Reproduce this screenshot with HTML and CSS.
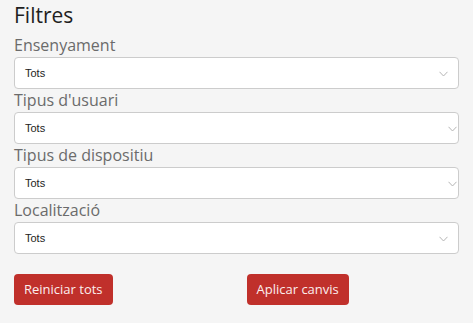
FILE: index.html
```html
<!DOCTYPE html>
<html>
<head>
<meta charset="utf-8">
<link rel="stylesheet" href="styles.css">
</head>
<body>
<div class="panel">
  <h2 class="title">Filtres</h2>
  <div class="group">
    <label class="label">Ensenyament</label>
    <div class="select"><span>Tots</span><svg class="chev" width="9" height="6" viewBox="0 0 9 6"><path d="M0.5 0.8 L4.5 5 L8.5 0.8" fill="none" stroke="#b5b5b5" stroke-width="1"/></svg></div>
  </div>
  <div class="group">
    <label class="label">Tipus d'usuari</label>
    <div class="select edge"><span>Tots</span><svg class="chev" width="9" height="6" viewBox="0 0 9 6"><path d="M0.5 0.8 L4.5 5 L8.5 0.8" fill="none" stroke="#b5b5b5" stroke-width="1"/></svg></div>
  </div>
  <div class="group">
    <label class="label">Tipus de dispositiu</label>
    <div class="select edge"><span>Tots</span><svg class="chev" width="9" height="6" viewBox="0 0 9 6"><path d="M0.5 0.8 L4.5 5 L8.5 0.8" fill="none" stroke="#b5b5b5" stroke-width="1"/></svg></div>
  </div>
  <div class="group">
    <label class="label">Localització</label>
    <div class="select"><span>Tots</span><svg class="chev" width="9" height="6" viewBox="0 0 9 6"><path d="M0.5 0.8 L4.5 5 L8.5 0.8" fill="none" stroke="#b5b5b5" stroke-width="1"/></svg></div>
  </div>
  <div class="actions">
    <div><button class="btn">Reiniciar tots</button></div>
    <div><button class="btn">Aplicar canvis</button></div>
  </div>
</div>
</body>
</html>
```
FILE: styles.css
```css
html, body {
  margin: 0;
  padding: 0;
  background: #ffffff;
}
.panel {
  width: 473px;
  height: 323px;
  box-sizing: border-box;
  background: #f5f5f5;
  padding: 1px 14px 0 14px;
  font-family: "Open Sans", sans-serif;
}
.title {
  margin: 0 0 5px 0;
  font-size: 21px;
  font-weight: 400;
  line-height: 28px;
  color: #1f1f1f;
}
.group {
  display: flex;
  flex-direction: column;
}
.label {
  font-size: 16px;
  line-height: 23px;
  color: #6b6b6b;
  height: 23px;
}
.select {
  height: 32px;
  box-sizing: border-box;
  background: #ffffff;
  border: 1px solid #cccccc;
  border-radius: 4px;
  display: flex;
  align-items: center;
  justify-content: space-between;
  padding: 0 10px 0 10px;
  font-family: "Liberation Sans", Arial, sans-serif;
  font-size: 11px;
  color: #222222;
}
.select.edge {
  padding-right: 1px;
}
.chev {
  display: block;
  margin-top: 2px;
}
.actions {
  display: grid;
  grid-template-columns: 1fr 1fr;
  column-gap: 20px;
  margin-top: 20px;
}
.btn {
  background: #c0302b;
  color: #fbeeee;
  border: none;
  border-radius: 4px;
  height: 31px;
  padding: 0 10px;
  font-family: "Open Sans", sans-serif;
  font-size: 13px;
  line-height: 31px;
}
```
